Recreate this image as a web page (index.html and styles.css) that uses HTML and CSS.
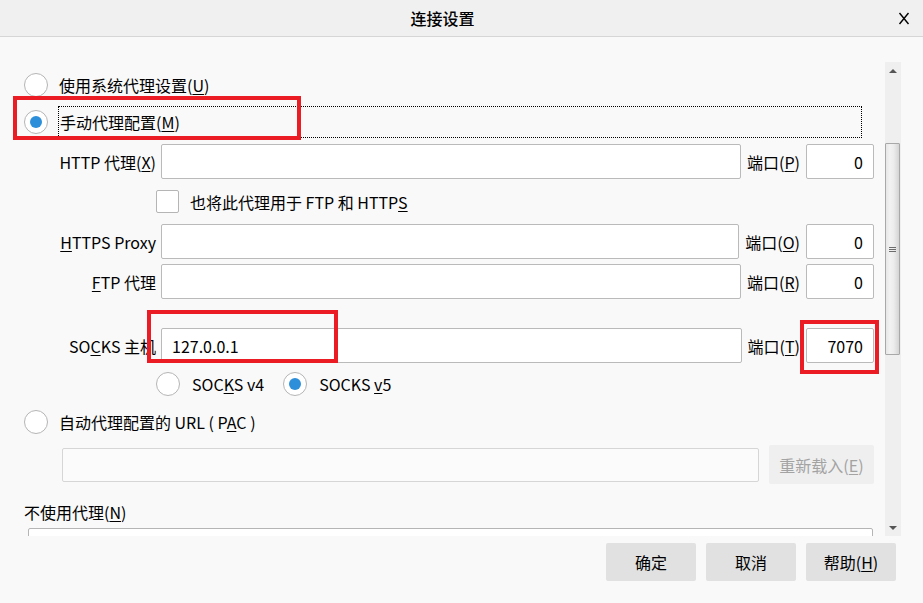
FILE: index.html
```html
<!DOCTYPE html>
<html lang="zh-CN">
<head>
    <meta charset="UTF-8">
    <title>连接设置</title>
    <link rel="stylesheet" href="styles.css">
</head>
<body>
    <div class="titlebar">
        <div class="title">连接设置</div>
        <div class="close">
            <svg width="12" height="13" viewBox="0 0 12 13"><path d="M1.5 1 L10.5 12 M10.5 1 L1.5 12" stroke="#000" stroke-width="1.4" fill="none"/></svg>
        </div>
    </div>

    <div class="main">
        <div class="pane">
            <div class="radio-row first">
                <span class="radio"></span>
                <span>使用系统代理设置(<u>U</u>)</span>
            </div>

            <div class="radio-row manual">
                <span class="radio checked"></span>
                <span class="focus">手动代理配置(<u>M</u>)</span>
                <div class="mark mark-manual"></div>
            </div>

            <div class="field-row http">
                <label class="field-label">HTTP 代理(<u>X</u>)</label>
                <div class="text-input"></div>
                <span class="port-label">端口(<u>P</u>)</span>
                <div class="text-input port">0</div>
            </div>

            <div class="check-row">
                <span class="checkbox"></span>
                <span>也将此代理用于 FTP 和 HTTP<u>S</u></span>
            </div>

            <div class="field-row https">
                <label class="field-label"><u>H</u>TTPS Proxy</label>
                <div class="text-input"></div>
                <span class="port-label">端口(<u>O</u>)</span>
                <div class="text-input port">0</div>
            </div>

            <div class="field-row ftp">
                <label class="field-label"><u>F</u>TP 代理</label>
                <div class="text-input"></div>
                <span class="port-label">端口(<u>R</u>)</span>
                <div class="text-input port">0</div>
            </div>

            <div class="field-row socks">
                <label class="field-label">SO<u>C</u>KS 主机</label>
                <div class="text-input">127.0.0.1</div>
                <span class="port-label">端口(<u>T</u>)</span>
                <div class="text-input port">7070</div>
                <div class="mark mark-host"></div>
                <div class="mark mark-port"></div>
            </div>

            <div class="version-row">
                <div class="option v4">
                    <span class="radio"></span>
                    <span>SOC<u>K</u>S v4</span>
                </div>
                <div class="option">
                    <span class="radio checked"></span>
                    <span>SOCKS <u>v</u>5</span>
                </div>
            </div>

            <div class="radio-row pac">
                <span class="radio"></span>
                <span>自动代理配置的 URL ( P<u>A</u>C )</span>
            </div>

            <div class="pac-row">
                <div class="text-input disabled"></div>
                <button class="reload">重新载入(<u>E</u>)</button>
            </div>

            <div class="noproxy-label">不使用代理(<u>N</u>)</div>
            <div class="noproxy-box"></div>
        </div>

        <div class="scrollbar">
            <div class="sb-arrow"><span class="tri up"></span></div>
            <div class="sb-track">
                <div class="sb-thumb"><span class="grip"></span></div>
            </div>
            <div class="sb-arrow"><span class="tri down"></span></div>
        </div>
    </div>

    <div class="footer">
        <button class="btn">确定</button>
        <button class="btn">取消</button>
        <button class="btn">帮助(<u>H</u>)</button>
    </div>
</body>
</html>
```

FILE: styles.css
```css
body {
    margin: 0;
    width: 923px;
    height: 603px;
    overflow: hidden;
    background-color: #f9f9f9;
    font-family: "Noto Sans CJK SC", "Noto Sans", sans-serif;
    font-size: 16px;
    color: #000;
}

u {
    text-underline-offset: 2px;
}

.titlebar {
    display: flex;
    align-items: center;
    height: 36px;
    background-color: #f0f0f0;
    border-bottom: 1px solid #d6d6d6;
}

.title {
    margin: 0 auto;
    font-size: 16px;
    font-weight: 500;
}

.close {
    width: 38px;
    display: flex;
    justify-content: center;
    padding-top: 1px;
}

.main {
    display: flex;
    height: 474px;
    margin-top: 25px;
    padding-right: 22px;
}

.pane {
    flex: 1;
    position: relative;
    overflow: hidden;
    padding-right: 11px;
}

/* radio rows */
.radio-row {
    display: flex;
    align-items: center;
    height: 24px;
    padding-left: 24px;
    gap: 11px;
}

.radio-row.first {
    margin-top: 11px;
}

.radio-row.manual {
    position: relative;
    height: 32px;
    margin-top: 9px;
    gap: 10px;
}

.radio-row.pac {
    margin-top: 14px;
}

.radio {
    flex: none;
    width: 24px;
    height: 24px;
    box-sizing: border-box;
    border: 1px solid #b5b5b5;
    border-radius: 50%;
    background-color: #fff;
    display: flex;
    align-items: center;
    justify-content: center;
}

.radio.checked::after {
    content: "";
    width: 12px;
    height: 12px;
    border-radius: 50%;
    background-color: #2d8fd9;
}

.focus {
    flex: 1;
    align-self: stretch;
    display: flex;
    align-items: center;
    padding-left: 1px;
    margin-right: 12px;
    border: 1px dotted #000;
}

/* red annotation frames */
.mark {
    position: absolute;
    box-sizing: border-box;
    border: 4px solid #ec1c24;
}

.mark-manual {
    left: 13px;
    top: -10px;
    width: 288px;
    height: 44px;
}

.mark-host {
    left: 147px;
    top: -18px;
    width: 191px;
    height: 53px;
}

.mark-port {
    left: 800px;
    top: -8px;
    width: 79px;
    height: 54px;
}

/* field rows */
.field-row {
    position: relative;
    display: flex;
    align-items: center;
    height: 35px;
}

.field-row.http {
    margin-top: 6px;
}

.field-row.https {
    margin-top: 11px;
}

.field-row.ftp {
    margin-top: 5px;
}

.field-row.socks {
    margin-top: 29px;
}

.field-label {
    flex: none;
    width: 161px;
    box-sizing: border-box;
    padding-right: 5px;
    text-align: right;
    white-space: nowrap;
}

.text-input {
    flex: 1;
    height: 35px;
    box-sizing: border-box;
    display: flex;
    align-items: center;
    padding: 0 10px;
    background-color: #fff;
    border: 1px solid #bababa;
    border-radius: 2px;
}

.text-input.port {
    flex: none;
    width: 68px;
    justify-content: flex-end;
    padding-right: 10px;
}

.text-input.disabled {
    height: 34px;
    border-color: #d6d6d6;
    background-color: #fbfbfb;
}

.port-label {
    margin: 0 6px;
    white-space: nowrap;
}

.check-row {
    display: flex;
    align-items: center;
    height: 23px;
    margin-top: 11px;
    padding-left: 156px;
    gap: 11px;
}

.checkbox {
    width: 23px;
    height: 23px;
    box-sizing: border-box;
    border: 1px solid #b5b5b5;
    border-radius: 2px;
    background-color: #fff;
}

.version-row {
    display: flex;
    align-items: center;
    height: 24px;
    margin-top: 9px;
    padding-left: 156px;
    gap: 19px;
}

.option {
    display: flex;
    align-items: center;
    gap: 12px;
}

.pac-row {
    display: flex;
    align-items: center;
    height: 39px;
    margin-top: 11px;
    padding-left: 62px;
}

.reload {
    width: 105px;
    height: 39px;
    margin-left: 10px;
    border: none;
    border-radius: 2px;
    background-color: #efefef;
    color: #a3a3a3;
    font-family: inherit;
    font-size: 16px;
    padding: 0;
}

.noproxy-label {
    height: 20px;
    line-height: 20px;
    margin-top: 18px;
    padding-left: 24px;
}

.noproxy-box {
    height: 100px;
    margin: 6px 1px 0 28px;
    background-color: #fff;
    border: 1px solid #b5b5b5;
    border-radius: 2px;
}

/* scrollbar */
.scrollbar {
    width: 16px;
    display: flex;
    flex-direction: column;
    background-color: #efefef;
}

.sb-arrow {
    height: 17px;
    display: flex;
    align-items: center;
    justify-content: center;
}

.tri {
    width: 0;
    height: 0;
    border-left: 4px solid transparent;
    border-right: 4px solid transparent;
}

.tri.up {
    border-bottom: 4px solid #555;
}

.tri.down {
    border-top: 4px solid #555;
}

.sb-track {
    flex: 1;
    padding-top: 64px;
}

.sb-thumb {
    height: 212px;
    width: 15px;
    box-sizing: border-box;
    border: 1px solid #a8a8a8;
    border-radius: 1px;
    background: linear-gradient(to right, #e6e6e6, #f2f2f2 30%, #ececec 60%, #d4d4d4);
    display: flex;
    align-items: center;
    justify-content: center;
}

.grip {
    width: 7px;
    height: 5px;
    background: repeating-linear-gradient(to bottom, #6c6c6c 0, #6c6c6c 1px, transparent 1px, transparent 2px);
}

/* footer buttons */
.footer {
    display: flex;
    justify-content: flex-end;
    gap: 10px;
    margin-top: 7px;
    padding-right: 27px;
}

.btn {
    width: 90px;
    height: 38px;
    border: none;
    border-radius: 2px;
    background-color: #e1e1e1;
    font-family: inherit;
    font-size: 16px;
    color: #000;
    padding: 0;
}
```
